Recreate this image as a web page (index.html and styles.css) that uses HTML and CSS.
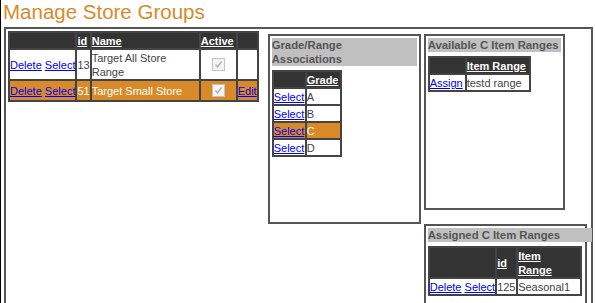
FILE: index.html
```html
<!DOCTYPE html>
<html lang="en">
<head>
    <meta charset="UTF-8">
    <meta name="viewport" content="width=device-width, initial-scale=1.0">
    <title>Manage Store Groups</title>
    <link rel="stylesheet" href="styles.css">
</head>
<body>
    <h1 class="page-title">Manage Store Groups</h1>

    <div class="groups-box">
        <table class="grid store-grid">
            <tr>
                <th class="w-actions"></th>
                <th class="w-id"><a href="#">id</a></th>
                <th class="w-name"><a href="#">Name</a></th>
                <th class="w-active"><a href="#">Active</a></th>
                <th class="w-edit"></th>
            </tr>
            <tr>
                <td class="actions"><a href="#">Delete</a> <a href="#">Select</a></td>
                <td>13</td>
                <td>Target All Store Range</td>
                <td class="chk-cell"><span class="chk"><svg width="11" height="11" viewBox="0 0 11 11"><path d="M2.5 5.5 L4.5 8 L8.5 2.5" fill="none" stroke="#b4b4b4" stroke-width="1.4"/></svg></span></td>
                <td></td>
            </tr>
            <tr class="selected">
                <td class="actions"><a href="#">Delete</a> <a href="#">Select</a></td>
                <td>51</td>
                <td>Target Small Store</td>
                <td class="chk-cell"><span class="chk"><svg width="11" height="11" viewBox="0 0 11 11"><path d="M2.5 5.5 L4.5 8 L8.5 2.5" fill="none" stroke="#b4b4b4" stroke-width="1.4"/></svg></span></td>
                <td><a href="#">Edit</a></td>
            </tr>
        </table>

        <div class="panel grade-panel">
            <div class="panel-title">Grade/Range<br>Associations</div>
            <table class="grid">
                <tr>
                    <th class="w-select"></th>
                    <th class="w-grade"><a href="#">Grade</a></th>
                </tr>
                <tr><td><a href="#">Select</a></td><td>A</td></tr>
                <tr><td><a href="#">Select</a></td><td>B</td></tr>
                <tr class="selected"><td><a href="#">Select</a></td><td>C</td></tr>
                <tr><td><a href="#">Select</a></td><td>D</td></tr>
            </table>
        </div>

        <div class="side-col">
            <div class="panel avail-panel">
                <div class="panel-title">Available C Item Ranges</div>
                <table class="grid">
                    <tr>
                        <th class="w-assign"></th>
                        <th class="w-range"><a href="#">Item Range</a></th>
                    </tr>
                    <tr><td><a href="#">Assign</a></td><td>testd range</td></tr>
                </table>
            </div>

            <div class="panel assigned-panel">
                <div class="panel-title">Assigned C Item Ranges</div>
                <table class="grid">
                    <tr>
                        <th class="w-actions2"></th>
                        <th class="w-id2"><a href="#">id</a></th>
                        <th class="w-range wrap-head"><a href="#">Item Range</a></th>
                    </tr>
                    <tr>
                        <td class="actions"><a href="#">Delete</a> <a href="#">Select</a></td>
                        <td>125</td>
                        <td>Seasonal1</td>
                    </tr>
                </table>
            </div>
        </div>
    </div>
</body>
</html>
```

FILE: styles.css
```css
html, body {
    margin: 0;
    padding: 0;
}
body {
    font-family: "Liberation Sans", Arial, sans-serif;
    font-size: 11px;
    color: #444;
    background: white;
    border-left: 1px solid #000;
    height: 303px;
    box-sizing: border-box;
    overflow: hidden;
}
.page-title {
    margin: 0 0 3px 0;
    padding-left: 2px;
    font-size: 20.5px;
    line-height: 24px;
    font-weight: normal;
    color: #d98a28;
}
.groups-box {
    margin-left: 3px;
    width: 589px;
    height: 276px;
    box-sizing: border-box;
    border: 2px solid #555;
    border-bottom: none;
    padding: 2px;
    display: flex;
    align-items: flex-start;
}

/* grids */
.grid {
    border-collapse: collapse;
    border: 2px solid #444;
}
.grid th, .grid td {
    border: 2px solid #444;
    padding: 1px 0 0 0;
    line-height: 14px;
    text-align: left;
    vertical-align: middle;
}
.grid th {
    background: #333;
    font-weight: bold;
}
.grid th a {
    color: white;
}
.grid td a {
    color: #00f;
}
.grid td {
    background: white;
}
.grid tr.selected td {
    background: #d98a28;
    color: white;
}
.actions {
    white-space: nowrap;
}
.grid td.chk-cell {
    padding: 0;
    text-align: center;
}
.chk {
    display: inline-block;
    width: 13px;
    height: 13px;
    box-sizing: border-box;
    margin: 3px 3px 3px 4px;
    border: 1px solid #c4c4c4;
    background: #f4f4f4;
    vertical-align: middle;
}
.chk svg {
    display: block;
}
.wrap-head a {
    display: inline-block;
    width: min-content;
}

/* column widths */
.w-actions { width: 65px; }
.w-id { width: 12px; }
.w-name { width: 107px; }
.w-active { width: 35px; }
.w-edit { width: 19px; }
.w-select { width: 31px; }
.w-grade { width: 33px; }
.w-assign { width: 35px; }
.w-range { width: 62px; }
.w-actions2 { width: 64px; }
.w-id2 { width: 19px; }

/* panels */
.panel {
    border: 2px solid #555;
    padding: 2px;
    box-sizing: border-box;
}
.panel-title {
    background: #c0c0c0;
    color: #555;
    font-weight: bold;
    font-size: 11.3px;
    line-height: 14px;
    margin-bottom: 4px;
}
.grade-panel {
    margin: 3px 0 0 9px;
    width: 153px;
    height: 190px;
}
.side-col {
    margin: 3px 0 0 3px;
    display: flex;
    flex-direction: column;
    align-items: flex-start;
}
.avail-panel {
    width: 141px;
    height: 176px;
}
.assigned-panel {
    margin-top: 14px;
    width: 163px;
    height: 79px;
    border-bottom: none;
}
.assigned-panel .panel-title {
    width: 164px;
}
```
